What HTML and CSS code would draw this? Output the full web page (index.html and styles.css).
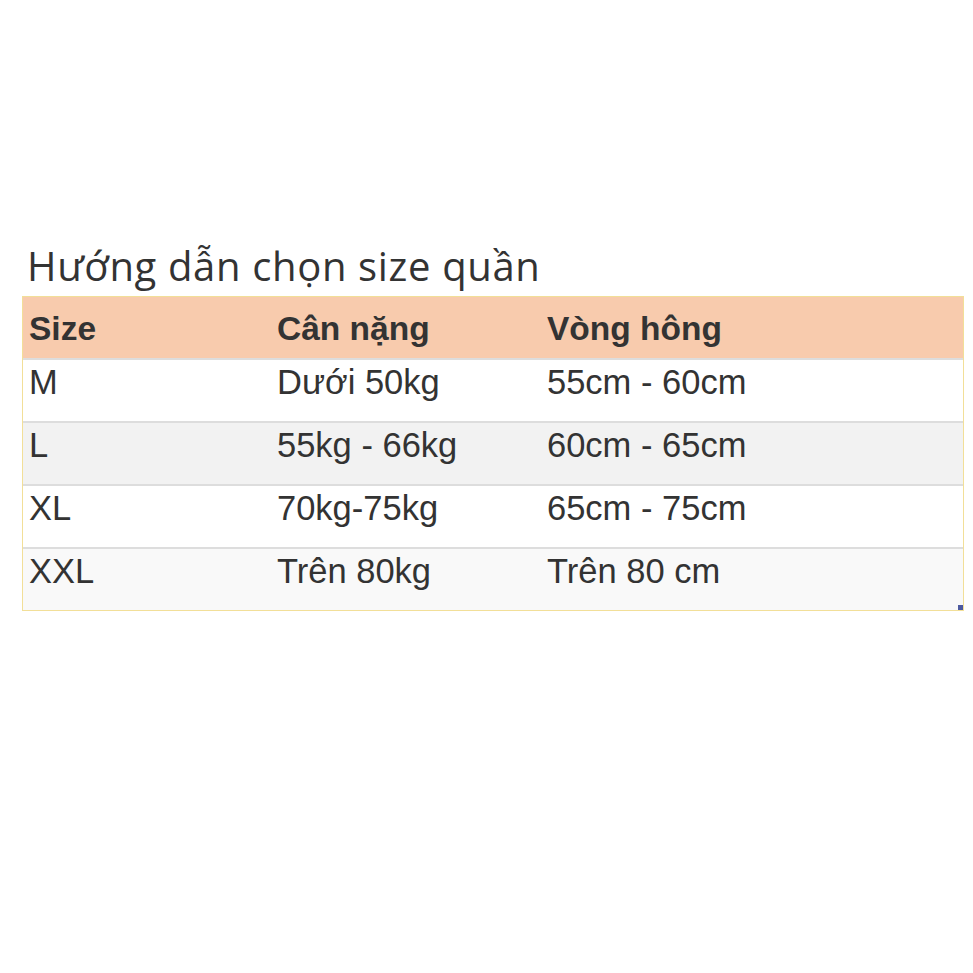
FILE: index.html
```html
<!DOCTYPE html>
<html lang="vi">
<head>
<meta charset="utf-8">
<title>Hướng dẫn chọn size quần</title>
<link rel="stylesheet" href="styles.css">
</head>
<body>
<div class="page">
  <h1 class="title">Hướng dẫn chọn size quần</h1>
  <div class="table-wrap">
    <table class="size-table">
      <colgroup>
        <col class="c1"><col class="c2"><col class="c3">
      </colgroup>
      <thead>
        <tr><th>Size</th><th>Cân nặng</th><th>Vòng hông</th></tr>
      </thead>
      <tbody>
        <tr class="r-white"><td>M</td><td>Dưới 50kg</td><td>55cm - 60cm</td></tr>
        <tr class="r-gray"><td>L</td><td>55kg - 66kg</td><td>60cm - 65cm</td></tr>
        <tr class="r-white"><td>XL</td><td>70kg-75kg</td><td>65cm - 75cm</td></tr>
        <tr class="r-light"><td>XXL</td><td>Trên 80kg</td><td>Trên 80 cm</td></tr>
      </tbody>
    </table>
    <span class="resize-handle"></span>
  </div>
</div>
</body>
</html>
```

FILE: styles.css
```css
html, body {
  margin: 0;
  padding: 0;
  background: #ffffff;
}
.page {
  padding: 236px 10px 0 22px;
}
.title {
  margin: 0 0 0 5px;
  font-family: "Open Sans", "Noto Sans", sans-serif;
  font-weight: 400;
  font-size: 40px;
  line-height: 60px;
  color: #333333;
  letter-spacing: 0.65px;
}
.table-wrap {
  position: relative;
  width: 942px;
  box-sizing: border-box;
  border: 1px solid #f2df98;
}
.size-table {
  width: 100%;
  border-collapse: collapse;
  table-layout: fixed;
  font-family: "Liberation Sans", Arial, sans-serif;
  font-size: 34.5px;
  color: #333333;
}
.c1 { width: 248px; }
.c2 { width: 270px; }
.c3 { width: auto; }
.size-table th,
.size-table td {
  text-align: left;
  padding: 0 6px;
  line-height: 44px;
  vertical-align: top;
}
.size-table th {
  background: #f8cbad;
  font-weight: 700;
  font-size: 33.5px;
  padding-top: 10px;
  padding-bottom: 7px;
}
.size-table td {
  border-top: 2px solid #dddddd;
  padding-top: 0;
  padding-bottom: 17px;
}
.r-white td { background: #ffffff; }
.r-gray td { background: #f2f2f2; }
.r-light td { background: #f9f9f9; }
.resize-handle {
  position: absolute;
  right: 0;
  bottom: 0;
  width: 5px;
  height: 5px;
  background: #4d5aa0;
}
```
